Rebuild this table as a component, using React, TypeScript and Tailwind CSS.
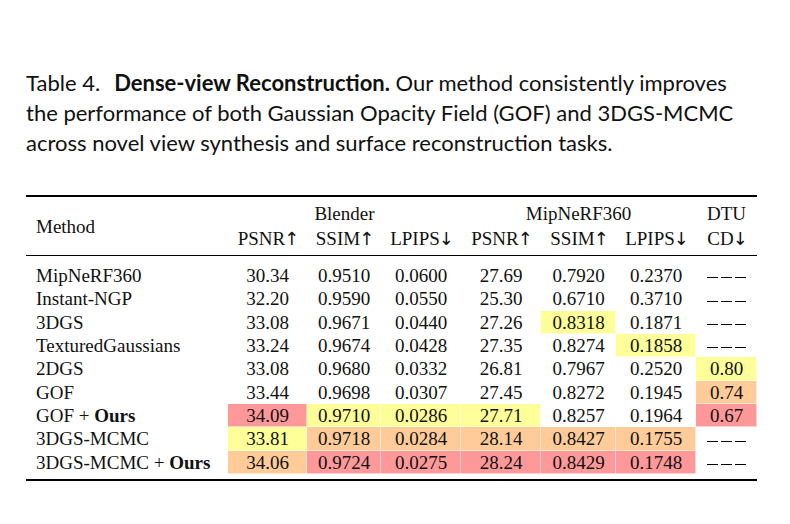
import React from 'react';

type Tone = 'r' | 'o' | 'y' | undefined;

interface Row {
  method: React.ReactNode;
  cells: [string, Tone][];
}

const toneClass = (t: Tone) =>
  t === 'r'
    ? 'bg-[#ff9999] shadow-[inset_-1px_-1px_0_rgba(255,255,255,0.55)]'
    : t === 'o'
    ? 'bg-[#ffcc99] shadow-[inset_-1px_-1px_0_rgba(255,255,255,0.55)]'
    : t === 'y'
    ? 'bg-[#ffff99] shadow-[inset_-1px_-1px_0_rgba(255,255,255,0.55)]'
    : '';

const Ours = () => <span className="font-bold">Ours</span>;

const Dashes = () => (
  <span className="inline-flex gap-[3px] align-middle">
    <span className="w-[11px] h-px bg-black" />
    <span className="w-[11px] h-px bg-black" />
    <span className="w-[11px] h-px bg-black" />
  </span>
);

const Arrow = ({ up }: { up?: boolean }) => (
  <span className="font-['DejaVu_Sans',sans-serif] text-[18px] ml-[-1px] tracking-[-2px]">{up ? '↑' : '↓'}</span>
);

const rows: Row[] = [
  {
    method: 'MipNeRF360',
    cells: [['30.34', undefined], ['0.9510', undefined], ['0.0600', undefined], ['27.69', undefined], ['0.7920', undefined], ['0.2370', undefined], ['-', undefined]],
  },
  {
    method: 'Instant-NGP',
    cells: [['32.20', undefined], ['0.9590', undefined], ['0.0550', undefined], ['25.30', undefined], ['0.6710', undefined], ['0.3710', undefined], ['-', undefined]],
  },
  {
    method: '3DGS',
    cells: [['33.08', undefined], ['0.9671', undefined], ['0.0440', undefined], ['27.26', undefined], ['0.8318', 'y'], ['0.1871', undefined], ['-', undefined]],
  },
  {
    method: 'TexturedGaussians',
    cells: [['33.24', undefined], ['0.9674', undefined], ['0.0428', undefined], ['27.35', undefined], ['0.8274', undefined], ['0.1858', 'y'], ['-', undefined]],
  },
  {
    method: '2DGS',
    cells: [['33.08', undefined], ['0.9680', undefined], ['0.0332', undefined], ['26.81', undefined], ['0.7967', undefined], ['0.2520', undefined], ['0.80', 'y']],
  },
  {
    method: 'GOF',
    cells: [['33.44', undefined], ['0.9698', undefined], ['0.0307', undefined], ['27.45', undefined], ['0.8272', undefined], ['0.1945', undefined], ['0.74', 'o']],
  },
  {
    method: <>GOF + <Ours /></>,
    cells: [['34.09', 'r'], ['0.9710', 'y'], ['0.0286', 'y'], ['27.71', 'y'], ['0.8257', undefined], ['0.1964', undefined], ['0.67', 'r']],
  },
  {
    method: '3DGS-MCMC',
    cells: [['33.81', 'y'], ['0.9718', 'o'], ['0.0284', 'o'], ['28.14', 'o'], ['0.8427', 'o'], ['0.1755', 'o'], ['-', undefined]],
  },
  {
    method: <>3DGS-MCMC + <Ours /></>,
    cells: [['34.06', 'o'], ['0.9724', 'r'], ['0.0275', 'r'], ['28.24', 'r'], ['0.8429', 'r'], ['0.1748', 'r'], ['-', undefined]],
  },
];

const subHeads: [string, boolean][] = [
  ['PSNR', true],
  ['SSIM', true],
  ['LPIPS', false],
  ['PSNR', true],
  ['SSIM', true],
  ['LPIPS', false],
  ['CD', false],
];

export default function App() {
  return (
    <div className="w-[790px] h-[524px] bg-white text-black overflow-hidden pl-[26px] pt-[68px]">
      <p className="font-['Lato',sans-serif] text-[22px] leading-[30px] whitespace-nowrap text-[#111]">
        Table 4.<span className="inline-block w-[14px]" />
        <span className="font-bold">Dense-view Reconstruction.</span> Our method consistently improves
        <br />
        the performance of both Gaussian Opacity Field (GOF) and 3DGS-MCMC
        <br />
        across novel view synthesis and surface reconstruction tasks.
      </p>

      <div className="mt-[37px] w-[731px] border-t-2 border-b-2 border-black font-['Liberation_Serif',serif] text-[19px] leading-[23px] text-[#111]">
        <table className="w-full table-fixed border-separate border-spacing-0">
          <colgroup>
            <col className="w-[202px]" />
            <col className="w-[79px]" />
            <col className="w-[74px]" />
            <col className="w-[80px]" />
            <col className="w-[80px]" />
            <col className="w-[75px]" />
            <col className="w-[80px]" />
            <col className="w-[61px]" />
          </colgroup>
          <thead>
            <tr>
              <th rowSpan={2} className="pt-[6px] pb-[6px] pl-[10px] text-left font-normal border-b border-black align-middle">
                Method
              </th>
              <th colSpan={3} className="pt-[5px] font-normal text-center">Blender</th>
              <th colSpan={3} className="pt-[5px] font-normal text-center">MipNeRF360</th>
              <th className="pt-[5px] font-normal text-center">DTU</th>
            </tr>
            <tr>
              {subHeads.map(([h, up], i) => (
                <th key={i} className="pt-[2px] pb-[5px] font-normal text-center border-b border-black whitespace-nowrap">
                  {h}
                  <Arrow up={up} />
                </th>
              ))}
            </tr>
          </thead>
          <tbody>
            <tr>
              <td colSpan={8} className="h-[8px] p-0" />
            </tr>
            {rows.map((r, i) => (
              <tr key={i} className="h-[23.33px]">
                <td className="pl-[10px] whitespace-nowrap p-0">{r.method}</td>
                {r.cells.map(([v, t], j) => (
                  <td key={j} className={`text-center p-0 ${toneClass(t)}`}>
                    {v === '-' ? <Dashes /> : v}
                  </td>
                ))}
              </tr>
            ))}
            <tr>
              <td colSpan={8} className="h-[5px] p-0" />
            </tr>
          </tbody>
        </table>
      </div>
    </div>
  );
}
